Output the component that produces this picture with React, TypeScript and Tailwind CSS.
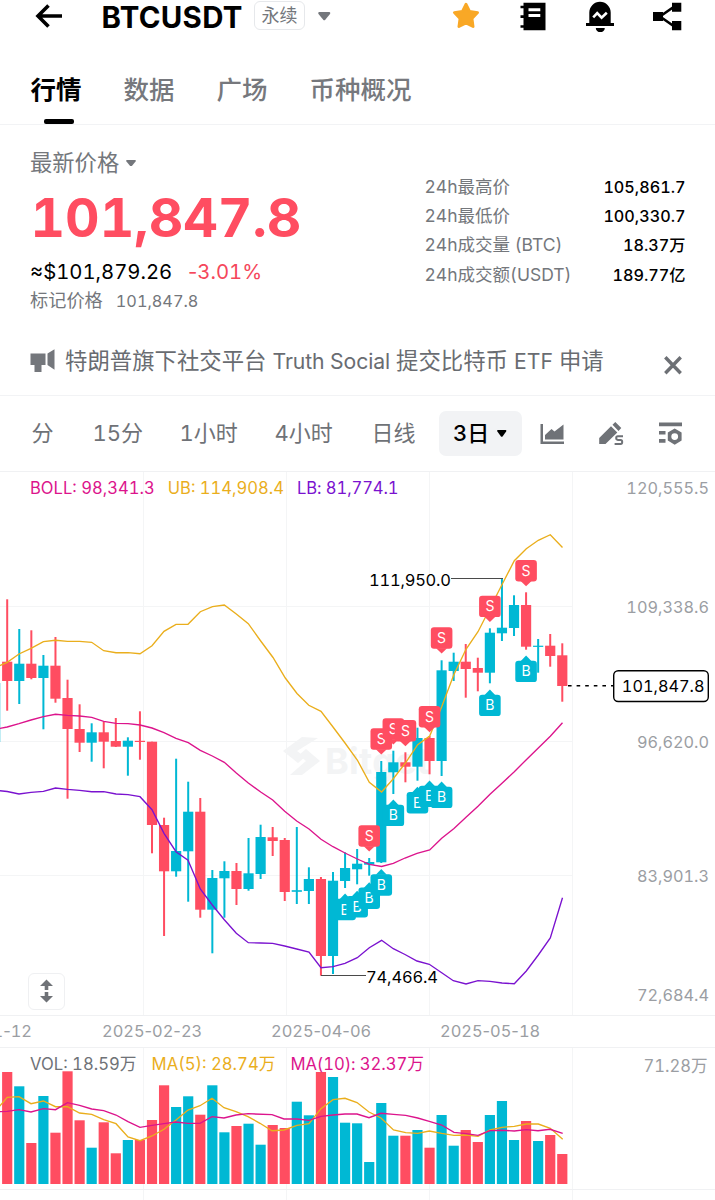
import { Fragment, type ReactNode } from 'react';

const RED = '#ff4d61';
const CYAN = '#00b8d4';
const GOLD = '#eaae1c';
const MAGENTA = '#dc148c';
const PURPLE = '#7a12cf';
const GRID = '#f4f5f6';
const STEP = 12.067;
const cx = (i: number) => 7.2 + STEP * i;

/* direction, high, low, body top, body bottom */
type Candle = ['u' | 'd', number, number, number, number];
const candles: Candle[] = [
  ['d', 599.3, 710.7, 661.7, 681],
  ['u', 629, 704, 663.7, 681],
  ['d', 630.3, 679.3, 663.7, 678],
  ['u', 655, 729.3, 665.7, 678],
  ['d', 637, 702.7, 665.7, 698.7],
  ['d', 679.7, 798.7, 698, 729],
  ['d', 704.3, 752, 729, 742.7],
  ['u', 723.3, 761.7, 732.3, 742.7],
  ['d', 721.7, 768.3, 732.3, 741.7],
  ['d', 718, 747, 741, 746.7],
  ['u', 737.3, 775.7, 740.7, 746.7],
  ['d', 711.3, 759.7, 740.8, 742],
  ['d', 741.7, 853.3, 741.7, 825],
  ['d', 817.7, 936, 825, 871.3],
  ['u', 758.7, 876.7, 851, 871.3],
  ['u', 781.7, 901.7, 811.7, 851.3],
  ['d', 798, 917.7, 811.7, 909.7],
  ['u', 870, 953.3, 878, 909.7],
  ['u', 861.3, 917.7, 871, 878.3],
  ['d', 863, 905, 871, 889],
  ['u', 838, 890.7, 873.3, 889],
  ['u', 824.7, 879, 837, 874],
  ['d', 827, 856, 837.3, 841],
  ['d', 838, 901, 840, 892],
  ['u', 827, 904, 890.2, 891.8],
  ['u', 867.3, 904, 879, 891],
  ['d', 877, 975.7, 879, 956],
  ['u', 872, 974, 880.7, 956],
  ['u', 852.3, 888, 868, 881],
  ['u', 849, 884.3, 863.7, 869.3],
  ['u', 858, 875.7, 862, 864.7],
  ['u', 761, 863, 772, 862.3],
  ['u', 750.7, 794, 762.3, 772.3],
  ['d', 752.3, 782.3, 762.3, 766.7],
  ['u', 727.7, 780.7, 738, 766.7],
  ['d', 736, 774.3, 738, 761],
  ['u', 660.3, 776, 670.3, 761],
  ['u', 652.7, 681, 661.7, 671],
  ['d', 644, 697.7, 661.7, 669],
  ['d', 657.7, 691.3, 668, 672.7],
  ['u', 628.3, 683.3, 632.7, 672.7],
  ['u', 578.7, 641, 627.7, 633.3],
  ['u', 595.3, 636, 605, 628],
  ['d', 592.3, 649.7, 605, 646.7],
  ['u', 639, 672.7, 645.7, 646.9],
  ['d', 634, 666.7, 645.7, 656],
  ['d', 643.3, 701.7, 655.3, 686],
];

const volumes = [
  1072, 1086.3, 1143, 1096, 1132.7, 1071.3, 1120.3, 1147.7, 1122.3, 1153.3, 1140, 1140, 1120, 1085.3, 1107, 1096.3,
  1114.7, 1085.3, 1132.3, 1126, 1123.7, 1144.7, 1125, 1128, 1101.7, 1115.3, 1072, 1077, 1122.7, 1123.3, 1162, 1103,
  1135.7, 1135.7, 1130, 1147.7, 1115, 1145.7, 1130, 1142, 1115, 1101, 1140, 1121, 1141, 1135, 1154,
];
const volumeUp = [1, 3, 7, 10, 14, 15, 17, 18, 20, 21, 24, 25, 27, 28, 29, 30, 31, 32, 34, 36, 37, 40, 41, 42, 44];

const upper =
  '-1,666 7.2,662.3 19,654 31,648.3 43.4,641.7 55.5,640.3 67.5,641.3 79.6,641.3 91.7,642.3 103.7,650.7 116,652.7 128,652.7 140,653.7 152,645.7 164,631.3 176,624.3 188,624.3 200.3,611.7 212.5,606.7 224.3,605 236.3,614 248.3,623.7 260.7,641 273,657.5 285.3,678 297,693.5 308.8,705.3 321,711.3 333,727 345,743 357.3,760 369.3,782.3 381.6,792 393.3,778.7 405.7,762.7 417.7,744.7 429.7,736 441.7,706.7 453.7,675 466,649.3 478,631.7 490,608.3 502.3,584 514.3,560.7 526.3,548.7 538.3,540.3 550.3,534.7 562.5,547.5';
const middle =
  '-1,728.5 7.2,727 19,723.7 31,720 43.4,716.7 55.5,714.3 67.5,715.3 79.6,716 91.7,717.3 103.7,721.3 116,723.3 128,723.7 140,725 152,728 164,732.7 176,738.3 188.3,742.7 200.3,750.3 212.3,756 224.3,762.3 236.3,773 248.3,783 260.7,792 272.7,800 284.7,811.3 296.7,821 309,829 321,839.3 333,846.7 345,853 357.3,859 369.3,864.3 381.6,866.5 393.3,863.3 405,858 417,853.3 429.7,850 441.7,838.3 454,828.5 466,817.3 478,806.3 490,794.3 502,783.3 514.3,771.7 526.3,759.7 538.3,748 550.3,736.3 562.5,722.7';
const lower =
  '-1,790.7 7.2,791.5 19,794 31,792.3 43.4,791.3 55.5,788 67.5,789.3 79.6,790.3 91.7,791.7 103.7,791.7 116,794 128,794.7 140,796.7 152,809.7 164,833.3 176,851.7 188,860.3 200.3,889 212.3,905 224.3,919.7 236.3,933.3 248.3,942.7 260.7,943 272.7,943.3 284.7,946 296.7,949 309,952 321,967.7 333,966.7 345,963.3 357.3,957.7 369.3,947.7 381.6,940.3 393.3,948.7 405,954.5 417,961 429.3,964.3 441.7,972.7 453.3,980.7 466,984 478,980.7 490,981.3 502,983 514.3,983.7 526.3,971 538.3,955 550.3,938 562.5,897.8';
const volMa5 =
  '-1,1107 7.2,1097.3 19,1096.7 31,1103.7 43.4,1101 55.5,1106.7 67.5,1106.7 79.6,1113 91.7,1114.3 103.7,1119.7 116,1123.7 128,1137 140,1140.7 152,1136 164,1129.3 176,1120 188,1110 200,1105.7 212,1098.3 224,1107.7 236,1111.7 248,1116.7 260,1123.3 272,1130.7 284,1130 297,1125.3 309,1123.7 321,1108.7 333,1099.7 345,1098.3 357,1102.5 369,1112 381,1118 393.5,1130 405.7,1132.7 417.7,1133.3 429.3,1131 441.7,1133.3 454,1135.3 466,1135 478,1136.3 490,1130 502,1127.3 514.3,1126.3 526.3,1124 538.3,1124 550.3,1128.3 562.7,1139.3';
const volMa10 =
  '-1,1111.7 7.2,1111.3 19,1109.7 31,1112 43.4,1108.7 55.5,1109.7 67.5,1102.7 79.6,1105.3 91.7,1109 103.7,1110.7 116,1115 128,1121.7 140,1127.3 152,1125.3 164,1123.7 176,1122 188,1123.3 200,1123.3 212,1116.7 224,1118 236,1115 248,1113.7 272,1114.7 284,1119 297,1119 309,1120.3 321,1116.3 333,1115 345,1114 357,1114 369,1117.7 381,1113.3 393.5,1114.3 405.7,1115.3 417.7,1118 429.3,1121.3 441.7,1125 454,1132.3 466,1133.7 478,1135.3 490,1130.7 502,1130.3 514.3,1131 526.3,1129.7 538,1130.7 550,1129.3 562.7,1133.3';

/* candle index, side, y of the bubble's top edge */
const marks: [number, 'S' | 'B', number][] = [
  [28, 'B', 898.8],
  [29, 'B', 896],
  [30, 'B', 887.5],
  [31, 'B', 874.3],
  [32, 'B', 804.7],
  [34, 'B', 792],
  [35, 'B', 785.7],
  [36, 'B', 786.7],
  [40, 'B', 694.7],
  [43, 'B', 660.7],
  [30, 'S', 825.3],
  [31, 'S', 728.3],
  [32, 'S', 718.3],
  [33, 'S', 720],
  [35, 'S', 706],
  [36, 'S', 627.3],
  [40, 'S', 595.7],
  [43, 'S', 560],
];

function Mark({ i, side, top }: { i: number; side: 'S' | 'B'; top: number }) {
  const x = cx(i);
  const color = side === 'S' ? RED : CYAN;
  const tip =
    side === 'S'
      ? `M${x - 5.5} ${top + 21} L${x} ${top + 26.3} L${x + 5.5} ${top + 21}Z`
      : `M${x - 5.5} ${top + 0.5} L${x} ${top - 5.3} L${x + 5.5} ${top + 0.5}Z`;
  return (
    <g fill={color}>
      <rect x={x - 10.8} y={top} width={21.6} height={21.4} rx={3.2} />
      <path d={tip} />
      <text x={x} y={top + 15.7} textAnchor="middle" fill="#fff" fontSize={14}>
        {side}
      </text>
    </g>
  );
}

function GridLines({ top, bottom }: { top: number; bottom: number }) {
  return (
    <g stroke={GRID} strokeWidth={1}>
      {[143.5, 286.5, 429.5, 572.5].map((x) => (
        <path key={x} d={`M${x} ${top}V${bottom}`} />
      ))}
    </g>
  );
}

function Caret({ className }: { className: string }) {
  return (
    <svg viewBox="0 0 12 8" preserveAspectRatio="none" className={className} fill="currentColor">
      <path d="M1 0H11Q12.3 .6 11.5 1.8L7 7.3Q6 8.3 5 7.3L.5 1.8Q-.3 .6 1 0Z" />
    </svg>
  );
}

function Header() {
  return (
    <header className="flex h-[34px] items-start text-black">
      <svg className="ml-[35px] mt-[4px] h-[24px] w-[28px]" viewBox="0 0 28 24" fill="none" stroke="#000" strokeWidth="3.6">
        <path d="M27 12H3M13.5 1.5L3 12L13.5 22.5" />
      </svg>
      <h1 className="ml-[38.5px] w-[141px] text-[29.4px] leading-[35px] font-bold tracking-[0.35px] whitespace-nowrap">
        BTCUSDT
      </h1>
      <div className="ml-[11.5px] mt-[1px] flex h-[29px] w-[51px] items-center justify-center rounded-[6px] border-[1.5px] border-[#e6e8eb] text-[18px] leading-none text-[#74777c]">
        永续
      </div>
      <Caret className="ml-[13px] mt-[12px] h-[8.5px] w-[12.5px] text-[#74777c]" />
      <svg className="ml-[121.5px] mt-[2px] h-[27px] w-[28px]" viewBox="0 0 28 27" fill="#f9a826">
        <path
          d="M14 2.2L17.6 9.3L25.6 10.6L20 16.5L21.1 24.6L14 21L6.9 24.6L8 16.5L2.4 10.6L10.4 9.3Z"
          stroke="#f9a826"
          strokeWidth="2.8"
          strokeLinejoin="round"
        />
      </svg>
      <svg className="ml-[40px] mt-[2px] h-[29px] w-[26px]" viewBox="0 0 26 29">
        <path d="M3.5 .7H25.5V28.3H3.5V25.8H.5V23.2H3.5V15.9H.5V13.3H3.5V6.3H.5V3.7H3.5Z" />
        <path d="M8.5 6.3H20.3V9.3H8.5ZM8.5 11.9H20.3V14.9H8.5Z" fill="#fff" />
      </svg>
      <svg className="ml-[40px] mt-[1px] h-[31px] w-[28px]" viewBox="0 0 28 31">
        <path d="M3.3 22V11.5A10.7 10.7 0 0 1 24.7 11.5V22H28V25H0V22ZM9.8 27H18.8A4.5 4.3 0 0 1 9.8 27Z" />
        <path d="M7.2 16.3L11.2 12.2L15.6 16.6L20.8 11.7" fill="none" stroke="#fff" strokeWidth="2.6" />
      </svg>
      <svg className="ml-[38.5px] mt-[2px] h-[29px] w-[29px]" viewBox="0 0 29 29">
        <path d="M0 10H10V19H0ZM19 .7H28.3V9.8H19ZM19 19H28.3V28.2H19Z" />
        <path d="M22 4L7 14.5L22 25" fill="none" stroke="#000" strokeWidth="2.6" />
      </svg>
    </header>
  );
}

function Tabs() {
  return (
    <nav className="flex h-[91px] border-b border-[#f2f3f5] pl-[30.5px] text-[25.5px] font-medium text-[#76787d]">
      <div className="flex w-[51px] flex-col items-center font-bold text-black">
        <span className="mt-[37px] h-[36px] leading-[37px] whitespace-nowrap">行情</span>
        <span className="mt-[12px] ml-[6px] h-[5.5px] w-[30px] rounded-[2px] bg-black" />
      </div>
      <span className="mt-[37px] ml-[42px] h-[36px] w-[51px] leading-[37px] whitespace-nowrap">数据</span>
      <span className="mt-[37px] ml-[42px] h-[36px] w-[51px] leading-[37px] whitespace-nowrap">广场</span>
      <span className="mt-[37px] ml-[42px] h-[36px] leading-[37px] whitespace-nowrap">币种概况</span>
    </nav>
  );
}

const stats = [
  ['24h最高价', '105,861.7'],
  ['24h最低价', '100,330.7'],
  ['24h成交量 (BTC)', '18.37万'],
  ['24h成交额(USDT)', '189.77亿'],
];

function Price() {
  return (
    <section className="flex h-[200px] justify-between pr-[29.5px] pl-[30px]">
      <div className="flex flex-col">
        <div className="mt-[24px] flex h-[28px] items-center text-[22.3px] text-[#74777c]">
          最新价格
          <Caret className="ml-[7px] h-[6.5px] w-[10px]" />
        </div>
        <div className="mt-[9px] ml-[0.5px] h-[64px] text-[53.5px] leading-[64px] font-bold text-[#ff4d61]">101,847.8</div>
        <div className="mt-[9px] flex h-[26px] items-center text-[20.3px] text-black">
          <span className="w-[158px]">≈$101,879.26</span>
          <span className="text-[#f5475b]">
            <span className="normal-nums">-</span>3.01%
          </span>
        </div>
        <div className="mt-[4px] flex h-[24px] items-center gap-[13px] text-[18.2px] text-[#74777c]">
          标记价格
          <span className="text-[16.3px]">101,847.8</span>
        </div>
      </div>
      <dl className="mt-[47.5px] flex w-[261px] flex-col text-[16.2px]">
        {stats.map(([k, v]) => (
          <div key={k} className="flex h-[29.2px] items-center justify-between whitespace-nowrap">
            <dt className="text-[17.5px] text-[#74777c]">{k}</dt>
            <dd className="font-medium text-black">{v}</dd>
          </div>
        ))}
      </dl>
    </section>
  );
}

function Notice() {
  return (
    <section className="flex h-[71px] items-start border-b border-[#f2f3f5] pl-[30px] text-[22.4px] text-[#696c71]">
      <svg className="mt-[24px] h-[23px] w-[25px]" viewBox="0 0 25 23" fill="#74777c">
        <path d="M.5 4.5H15.5V16H11.5V23H4.5V16H.5ZM17.5 4.5L24.5 .3V20.7L17.5 16Z" />
      </svg>
      <p className="mt-[20px] ml-[10px] w-[540px] leading-[32px] whitespace-nowrap">
        特朗普旗下社交平台 <span className="text-[21.2px] tracking-[-0.1px]">Truth Social</span> 提交比特币{' '}
        <span className="text-[21.2px]">ETF</span> 申请
      </p>
      <svg className="mt-[31px] ml-[59px] h-[19px] w-[18px]" viewBox="0 0 18 19" stroke="#6d7075" strokeWidth="3.4">
        <path d="M1.3 1.3L16.7 17.3M16.7 1.3L1.3 17.3" />
      </svg>
    </section>
  );
}

function Frame({ className, children }: { className: string; children: ReactNode }) {
  return <span className={`whitespace-nowrap ${className}`}>{children}</span>;
}

function Timeframes() {
  return (
    <section className="flex h-[76px] items-center border-b border-[#f0f1f3] pl-[31.5px] text-[22px] text-[#6f7277]">
      <Frame className="w-[61px]">分</Frame>
      <Frame className="w-[87px]">15分</Frame>
      <Frame className="w-[95px]">1小时</Frame>
      <Frame className="w-[97px]">4小时</Frame>
      <Frame className="w-[67px]">日线</Frame>
      <button className="flex h-[45px] w-[83px] items-center justify-center gap-[8px] rounded-[7px] bg-[#f2f3f5] font-medium text-black">
        3日
        <Caret className="h-[7px] w-[9.5px]" />
      </button>
      <svg className="ml-[18px] h-[22px] w-[25px]" viewBox="0 0 25 22" fill="#6f7277">
        <path d="M.5 1H3V18.5H24V21H.5ZM5 16.5V12L11.5 6L14.5 8.5L23.5 1.5V16.5Z" />
      </svg>
      <svg className="ml-[33px] h-[25px] w-[27px]" viewBox="0 0 27 25" fill="#6f7277">
        <path d="M1.2 23V17L13 5.2L19.3 11.5L7.5 23ZM14.5 3.8L17.3 1L23.3 7L20.5 10Z" />
        <path
          d="M25 15.3H19.8Q18.2 15.3 18.2 17.1T19.8 18.9H22.6Q24.2 18.9 24.2 20.9T22.6 22.9H16.6"
          fill="none"
          stroke="#6f7277"
          strokeWidth="2"
        />
      </svg>
      <svg className="ml-[33.5px] h-[23px] w-[25px]" viewBox="0 0 25 23" fill="#6f7277">
        <path d="M1 .5H24V4.3H1ZM1 9H7.5V12.5H1ZM1 17H7.5V20.8H1Z" />
        <path fillRule="evenodd" d="M16.7 6.6L23.6 10.6V18.6L16.7 22.7L9.8 18.6V10.6ZM16.7 11.2A3.4 3.4 0 1 0 16.7 18A3.4 3.4 0 1 0 16.7 11.2Z" />
      </svg>
    </section>
  );
}

function MainChart() {
  return (
    <section className="relative h-[543px]">
      <svg viewBox="0 472 715 543" className="block h-[543px] w-[715px]">
        <GridLines top={471} bottom={1016} />
        <path d="M0 606.5H572M0 741.5H572M0 875.5H572" stroke={GRID} />
        <g fill="#f3f4f5">
          <path d="M302 737L283 751L298 763L305 757L297 751L318 738ZM302 775L320 761L306 749L299 755L306 761L290 775Z" />
          <text x="325" y="774" fontSize="36" textLength="105" className="font-bold">
            Bitget
          </text>
        </g>
        <path d="M0 683V742" stroke={CYAN} strokeOpacity=".35" strokeWidth="1.4" />
        {candles.map(([dir, high, low, top, bottom], i) => (
          <g key={i} fill={dir === 'u' ? CYAN : RED}>
            <rect x={cx(i) - 1} y={high} width={2} height={low - high} />
            <rect x={cx(i) - 5.1} y={top} width={10.2} height={Math.max(bottom - top, 1.2)} />
          </g>
        ))}
        <g fill="none" strokeWidth="1.35">
          <polyline points={upper} stroke={GOLD} />
          <polyline points={middle} stroke={MAGENTA} />
          <polyline points={lower} stroke={PURPLE} />
        </g>
        <path d="M451 578.5H503M321 975.5H366" stroke="#4a4a4a" />
        <g fontSize="16.5" fill="#000">
          <text x="369" y="585.7" textLength="82">111,950.0</text>
          <text x="366" y="982.7" textLength="72">74,466.4</text>
        </g>
        {marks.map(([i, side, top]) => (
          <Mark key={`${side}${i}`} i={i} side={side} top={top} />
        ))}
        <path d="M568 685.7H613" stroke="#000" strokeWidth="1.6" strokeDasharray="3.6 5" />
        <rect x="613.7" y="670.7" width="94.6" height="30.8" rx="4.5" fill="#fff" stroke="#000" strokeWidth="1.4" />
        <g fontSize="16.3" fill="#9b9ea3" textAnchor="end">
          <text x="704.5" y="692.3" fill="#000">101,847.8</text>
          <text x="709" y="494.3">120,555.5</text>
          <text x="709" y="613">109,338.6</text>
          <text x="709" y="748">96,620.0</text>
          <text x="709" y="882.3">83,901.3</text>
          <text x="709" y="1001.3">72,684.4</text>
        </g>
      </svg>
      <div className="absolute top-[6px] left-[30px] flex gap-[13px] text-[16.6px] leading-[20px] whitespace-nowrap">
        <span className="text-[#dc148c]">BOLL: 98,341.3</span>
        <span className="text-[#eaae1c]">UB: 114,908.4</span>
        <span className="text-[#7a12cf] tracking-[-0.1px]">LB: 81,774.1</span>
      </div>
      <div className="absolute top-[501px] left-[28px] flex size-[36.5px] items-center justify-center rounded-[6px] border-[1.5px] border-[#eff0f2] bg-white">
        <svg viewBox="0 0 13 24" className="h-[24px] w-[13px]" fill="#6f7277">
          <path d="M6.5 .5L13 7H8.3V11H4.7V7H0ZM6.5 23.5L0 17H4.7V13H8.3V17H13Z" />
        </svg>
      </div>
    </section>
  );
}

function DateLabel({ value }: { value: string }) {
  return (
    <>
      {value.split('-').map((part, i) => (
        <Fragment key={i}>
          {i > 0 && <span className="normal-nums">-</span>}
          {part}
        </Fragment>
      ))}
    </>
  );
}

function Dates() {
  return (
    <div className="flex h-[33px] items-center border-y border-[#f0f1f3] text-[16.4px] whitespace-nowrap text-[#9b9ea3]">
      <div className="flex w-[32px] justify-end overflow-hidden">
        <div>
          <DateLabel value="2025-01-12" />
        </div>
      </div>
      <div className="ml-[70px] w-[169px]">
        <DateLabel value="2025-02-23" />
      </div>
      <div className="w-[169px]">
        <DateLabel value="2025-04-06" />
      </div>
      <div>
        <DateLabel value="2025-05-18" />
      </div>
    </div>
  );
}

function Volume() {
  return (
    <section className="relative h-[152px] overflow-hidden">
      <svg viewBox="0 1048 715 152" className="block h-[152px] w-[715px]">
        <GridLines top={1047} bottom={1200} />
        <path d="M0 1189.5H715" stroke="#f0f1f3" />
        {volumes.map((y, i) => (
          <rect key={i} x={cx(i) - 5.1} y={y} width={10.2} height={1184 - y} fill={volumeUp.includes(i) ? CYAN : RED} />
        ))}
        <g fill="none" strokeWidth="1.35">
          <polyline points={volMa5} stroke={GOLD} />
          <polyline points={volMa10} stroke={MAGENTA} />
        </g>
      </svg>
      <div className="absolute top-[4.5px] left-[30px] flex gap-[15px] text-[16.7px] leading-[22px] whitespace-nowrap">
        <span className="text-[#6f7277]">VOL: 18.59万</span>
        <span className="text-[#eaae1c]">MA(5): 28.74万</span>
        <span className="text-[#dc148c] tracking-[-0.1px]">MA(10): 32.37万</span>
      </div>
      <div className="absolute top-[7px] right-[7.5px] text-[16.6px] leading-[22px] text-[#9b9ea3]">71.28万</div>
    </section>
  );
}

export default function App() {
  return (
    <main className="h-[1200px] w-[715px] overflow-hidden bg-white tabular-nums [font-family:Inter,'Noto_Sans_CJK_SC',sans-serif]">
      <Header />
      <Tabs />
      <Price />
      <Notice />
      <Timeframes />
      <MainChart />
      <Dates />
      <Volume />
    </main>
  );
}
